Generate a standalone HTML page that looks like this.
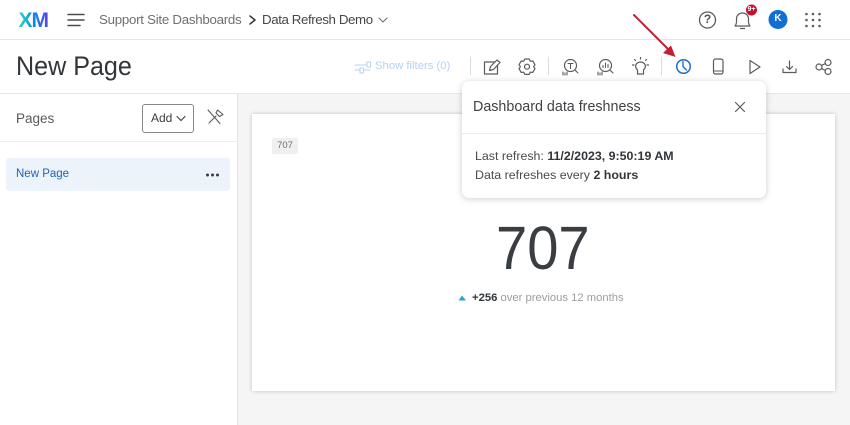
<!DOCTYPE html>
<html><head><meta charset="utf-8"><style>
html,body{margin:0;padding:0;width:850px;height:425px;overflow:hidden;background:#fff}
body{font-family:"Liberation Sans",sans-serif;position:relative;color:#32363a}
.a{position:absolute;white-space:nowrap;line-height:1}
svg{position:absolute;overflow:visible;fill:none;stroke:#5a5b5d;stroke-width:1.200;stroke-linecap:round;stroke-linejoin:round}
</style></head><body>
<div class="a" style="left:0;top:39px;width:850px;height:1px;background:#e6e6e6"></div>
<div class="a" style="left:0;top:93px;width:850px;height:1px;background:#e8e8e8"></div>
<div class="a" style="left:238px;top:94px;width:612px;height:331px;background:#f5f5f5"></div>
<div class="a" style="left:237px;top:94px;width:1px;height:331px;background:#e4e4e4"></div>
<div class="a" style="left:0;top:141px;width:237px;height:1px;background:#eeeeee"></div>

<div class="a" style="left:18.500px;top:10px;font-size:21px;font-weight:bold;letter-spacing:-1px;background:linear-gradient(90deg,#21dbc0,#0a8be8 50%,#5a3ff0);-webkit-background-clip:text;background-clip:text;color:transparent">XM</div>
<svg style="left:0;top:0" width="850" height="425">
<path d="M68 14.500H84M68 20H84M68 25.500H80" stroke="#4a4c4f" stroke-width="1.500"/>
<path d="M250 16L255 20L250 24" stroke="#32363a" stroke-width="1.500"/>
<path d="M379 18L383 22L387 18" stroke="#6b6d70" stroke-width="1"/>
<circle cx="707.500" cy="20" r="8" stroke-width="1.300"/>
<path d="M735 26C737 24 736.500 21 736.500 19C736.500 15.500 739 13 742.500 13C746 13 748.500 15.500 748.500 19C748.500 21 748 24 750 26ZM740.500 28.500H744.500" stroke-width="1.200"/>
<circle cx="751.500" cy="10" r="5.500" fill="#c8102e" stroke="none"/>
<circle cx="778" cy="19.500" r="9.500" fill="#0f6fd3" stroke="none"/>
<g fill="#5c5e60" stroke="none"><circle cx="806.500" cy="14" r="1.300"/><circle cx="813" cy="14" r="1.300"/><circle cx="819.500" cy="14" r="1.300"/><circle cx="806.500" cy="20" r="1.300"/><circle cx="813" cy="20" r="1.300"/><circle cx="819.500" cy="20" r="1.300"/><circle cx="806.500" cy="26" r="1.300"/><circle cx="813" cy="26" r="1.300"/><circle cx="819.500" cy="26" r="1.300"/></g>

<path d="M355 65H366M355 70H360M364 70H370" stroke="#b4d2f2" stroke-width="1.100"/><rect x="367" y="62" width="3.500" height="5" stroke="#b4d2f2" stroke-width="1"/><rect x="360" y="68" width="3.500" height="5" stroke="#b4d2f2" stroke-width="1"/>
<path d="M470.500 57V75M548.500 57V75M661.500 57V75" stroke="#dcdcdc" stroke-width="1"/>
<path d="M495 62H484.500V74H497.500V65.500M489.500 70.500L490.500 66.500L497 60L500 62.500L493.500 69.500Z"/>
<path d="M524.800 59H529.200L530.300 61.200L532.800 61L535 64.800L533.600 66.700L535 68.600L532.800 72.400L530.300 72.200L529.200 74.400H524.800L523.700 72.200L521.200 72.400L519 68.600L520.400 66.700L519 64.800L521.200 61L523.700 61.200Z"/><circle cx="527" cy="66.700" r="2.500"/>
<circle cx="570.500" cy="65.500" r="6"/><path d="M575 70L578 73M568 63.500H573M570.500 63.500V68.500M563 72V75M565 73V75M567 72V75" stroke-width="1.100"/>
<circle cx="605.500" cy="65.500" r="6"/><path d="M610 70L613 73M603 67.500V65.500M605.500 67.500V63M608 67.500V64.500M598 72V75M600 73V75M602 72V75" stroke-width="1.100"/>
<path d="M637.500 70C634.500 67 635 62.500 640.500 62C646 62.500 646.500 67 643.500 70V74H637.500ZM632.500 65H634M647 65H648.500M634.500 59.500L635.500 60.500M646.500 59.500L645.500 60.500M640.500 57.500V59"/>
<circle cx="683.500" cy="66.500" r="6.800" stroke="#1f6fd0" stroke-width="1.500"/><path d="M683 61.500V66.500L686.500 70" stroke="#1f6fd0" stroke-width="1.400"/>
<rect x="713.500" y="59" width="9.500" height="15" rx="2"/><path d="M714 71H723" stroke-width="1.100"/>
<path d="M750 60.500L760 67L750 73.500Z"/>
<path d="M783 69V72.500H796V69M789.500 61V69M786.500 66.500L789.500 69.500L792.500 66.500"/>
<circle cx="819" cy="67" r="3"/><circle cx="828" cy="62.500" r="3"/><circle cx="828" cy="71.500" r="3"/><path d="M821.500 65.500L825.500 63.500M821.500 68.500L825.500 70.500"/>
<path d="M208 110L220 123.500M209 123L216 116M217.500 110L223 114.500L219.500 116.500L216 113Z" stroke-width="1.100"/>
</svg>

<div class="a" style="left:99px;top:13px;font-size:13.300px;letter-spacing:-.27px;color:#6d6f72">Support Site Dashboards</div>
<div class="a" style="left:262px;top:13px;font-size:13.300px;letter-spacing:-.4px;color:#44474a">Data Refresh Demo</div>
<div class="a" style="left:701px;top:13px;width:13px;text-align:center;font-size:12px;font-weight:bold;color:#525355">?</div>
<div class="a" style="left:746px;top:6px;width:11px;text-align:center;font-size:7px;font-weight:bold;color:#fff">9+</div>
<div class="a" style="left:768px;top:14px;width:20px;text-align:center;font-size:10px;font-weight:bold;color:#fff">K</div>
<div class="a" style="left:16px;top:53px;font-size:27px;color:#32363a;transform:scaleX(.93);transform-origin:left">New Page</div>
<div class="a" style="left:375px;top:61px;font-size:11.300px;color:#b4d2f2">Show filters (0)</div>
<div class="a" style="left:16px;top:112px;font-size:13.500px;color:#585a5d">Pages</div>
<div class="a" style="left:142px;top:104px;width:50px;height:27px;border:1px solid #85878a;border-radius:3px"></div>
<div class="a" style="left:151px;top:112px;font-size:12px;color:#3a3c3f">Add</div>
<svg style="left:0;top:0" width="850" height="425"><path d="M177 116.500L181 120.500L185 116.500" stroke="#3a3c3f" stroke-width="1.100"/></svg>
<div class="a" style="left:6px;top:158px;width:224px;height:33px;background:#ecf3fb;border-radius:3px"></div>
<svg style="left:0;top:0" width="850" height="425"><g fill="#3a3c3f" stroke="none"><circle cx="207.500" cy="175" r="1.500"/><circle cx="212.500" cy="175" r="1.500"/><circle cx="217.500" cy="175" r="1.500"/></g></svg>
<div class="a" style="left:16px;top:168.500px;font-size:11.500px;color:#1f62b8">New Page</div>

<div class="a" style="left:252px;top:114px;width:583px;height:277px;background:#fff;box-shadow:0 0 4px rgba(0,0,0,.22)"></div>
<div class="a" style="left:272px;top:138px;width:26px;height:16px;background:#efefef;border-radius:2px;text-align:center;font-size:9.500px;line-height:16px;color:#6d6f72">707</div>
<div class="a" style="left:496px;top:218px;font-size:61px;color:#3a3e42;transform:scaleX(.92);transform-origin:left">707</div>
<svg style="left:0;top:0" width="850" height="425"><path d="M458.500 300.500L462 295.500L466 300.500Z" fill="#2fa4c4" stroke="none"/></svg>
<div class="a" style="left:472px;top:292.500px;font-size:11.250px;color:#9a9da1"><b style="color:#32363a">+256</b> over previous 12 months</div>

<div class="a" style="left:462px;top:81px;width:304px;height:117px;background:#fff;border-radius:7px;box-shadow:0 1px 7px rgba(0,0,0,.2)"></div>
<div class="a" style="left:462px;top:133px;width:304px;height:1px;background:#ececec"></div>
<div class="a" style="left:473px;top:100px;font-size:14.300px;color:#3f4245">Dashboard data freshness</div>
<svg style="left:0;top:0" width="850" height="425"><path d="M735.500 102.500L744.500 111.500M744.500 102.500L735.500 111.500"/>
<path d="M634 15L669 50" stroke="#c3202f" stroke-width="2"/><path d="M675.500 57L663 53L671 45.500Z" fill="#c3202f" stroke="none"/></svg>
<div class="a" style="left:475px;top:150px;font-size:12.400px;color:#484b4e">Last refresh: <b style="color:#32363a">11/2/2023, 9:50:19 AM</b></div>
<div class="a" style="left:475px;top:169px;font-size:12.400px;color:#484b4e">Data refreshes every <b style="color:#32363a">2 hours</b></div>
</body></html>
